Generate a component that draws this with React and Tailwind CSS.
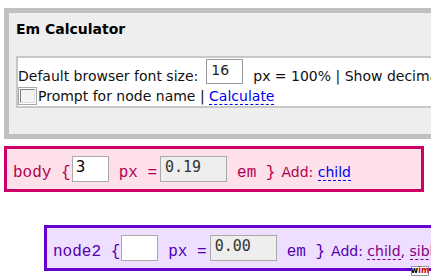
import React from 'react';

const sans = "font-['DejaVu_Sans',Verdana,sans-serif]";
const mono = "font-['Liberation_Mono','Courier_New',monospace]";
const sansMono = "font-['DejaVu_Sans_Mono',monospace]";

const Checkbox = () => (
  <span className="mt-[2px] flex h-[18px] w-[19px] shrink-0 items-center justify-center border border-[#a8a8a8] bg-white">
    <span className="h-[14px] w-[15px] border border-t-[#808080] border-l-[#808080] border-r-[#e0e0e0] border-b-[#e0e0e0] bg-[#f4f4f4]" />
  </span>
);

const Node = ({ name, value, result, links, indent, theme }) => (
  <div
    className={`flex h-[46px] shrink-0 items-start whitespace-nowrap border-[3px] pl-[6px] ${theme.box} ${indent}`}
  >
    <span className={`${mono} mt-[15px] text-[16px] leading-[19px] ${theme.text}`}>{name} {'{'}</span>
    <span className={`${sans} ml-[1px] mt-[7px] flex h-[26px] w-[37px] shrink-0 items-center border border-[#aaaaaa] bg-white px-[3px] pb-[3px] text-[15px] text-black`}>
      {value}
    </span>
    <span className={`${mono} ml-[10px] mt-[15px] text-[16px] leading-[19px] ${theme.text}`}>px =</span>
    <span className={`${sansMono} ml-[3px] mt-[7px] flex h-[26px] w-[67px] shrink-0 items-center border border-[#aaaaaa] bg-[#eeeeee] pl-[4px] pb-[3px] text-[15px] text-[#333333]`}>
      {result}
    </span>
    <span className={`${mono} ml-[10px] mt-[15px] text-[16px] leading-[19px] ${theme.text}`}>em {'}'}</span>
    <span className={`${sans} ml-[6px] mt-[15px] text-[14px] leading-[17px] ${theme.text}`}>
      Add:{' '}
      {links.map((l, i) => (
        <React.Fragment key={l}>
          <span className={`border-b border-dashed ${theme.link}`}>{l}</span>
          {i < links.length - 1 && <span className={theme.link.split(' ')[0]}>, </span>}
        </React.Fragment>
      ))}
    </span>
  </div>
);

export default function App() {
  return (
    <div className="relative h-[279px] w-[431px] overflow-hidden bg-white">
      {/* calculator settings */}
      <div className="ml-[4px] mt-[8px] h-[131px] w-[700px] border-[5px] border-[#c0c0c0] bg-[#eeeeee]">
        <h1 className={`${sans} pl-[7px] pt-[8px] text-[14px] font-bold leading-[17px] text-black`}>Em Calculator</h1>
        <div className={`${sans} ml-[7px] mt-[18px] border-2 border-[#c8c8c8] bg-white text-[14px] leading-[17px] text-[#111111] whitespace-nowrap`}>
          <div className="flex h-[27px] items-start">
            <span className="mt-[10px]">Default browser font size:</span>
            <span className="ml-[8px] mt-[1px] flex h-[25px] w-[37px] shrink-0 items-center border border-[#999999] bg-white pb-[2px] pl-[4px] text-[14px] text-[#222222]">
              16
            </span>
            <span className="ml-[10px] mt-[10px]">px = 100% | Show decimals</span>
          </div>
          <div className="flex h-[21px] items-start">
            <Checkbox />
            <span className="ml-[1px] mt-[3px]">
              Prompt for node name |{' '}
              <span className="border-b border-dashed border-[#0000ee] text-[#0000ee]">Calculate</span>
            </span>
          </div>
        </div>
      </div>

      {/* node tree */}
      <div className="mt-[7px] flex flex-col">
        <Node
          name="body"
          value="3"
          result="0.19"
          links={['child']}
          indent="ml-[4px] w-[420px]"
          theme={{
            box: 'border-[#cc0066] bg-[#fde0ea]',
            text: 'text-[#b0004f]',
            link: 'text-[#0000ee] border-[#0000ee]',
          }}
        />
        <div className="h-[33px]" />
        <Node
          name="node2"
          value=""
          result="0.00"
          links={['child', 'sibling']}
          indent="ml-[44px] w-[600px]"
          theme={{
            box: 'border-[#6600cc] bg-[#eedeff]',
            text: 'text-[#5200b0]',
            link: 'text-[#800080] border-[#800080]',
          }}
        />
      </div>

      {/* wim badge */}
      <div className="absolute left-[411px] top-[266px] flex h-[10px] w-[18px] items-center justify-center border border-[#999999] bg-white font-['DejaVu_Sans',sans-serif] text-[8px] font-bold leading-none">
        <span className="text-black">w</span>
        <span className="text-[#cc0000]">im</span>
      </div>
    </div>
  );
}
